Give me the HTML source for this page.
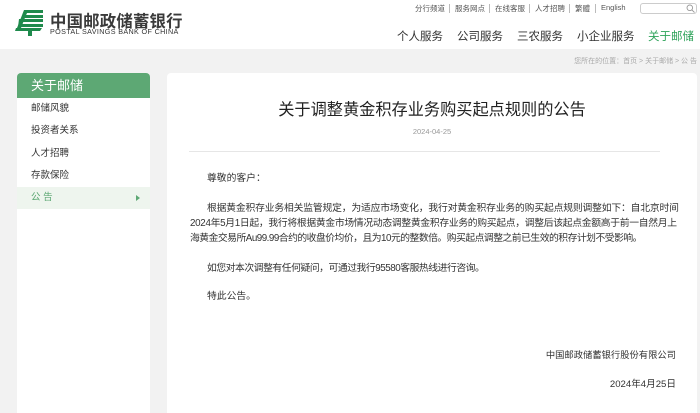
<!DOCTYPE html>
<html><head><meta charset="utf-8"><style>
*{margin:0;padding:0;box-sizing:border-box}
body{width:700px;height:407px;overflow:hidden;background:#f2f2f2;font-family:"Liberation Sans","Noto Sans CJK SC",sans-serif;color:#333;position:relative}
.hd{position:absolute;left:0;top:0;width:700px;height:49px;background:#fff}
.abs{position:absolute;white-space:nowrap}
.tl{font-size:7.5px;color:#555;top:3px}
.sep{position:absolute;top:4px;width:1px;height:9px;background:#bbb}
.nav{font-size:11.5px;color:#333;top:28px}
.side{position:absolute;left:17px;top:73px;width:133px;height:340px;background:#fff;border-radius:4px 4px 0 0;overflow:hidden}
.side .h{height:25px;background:#5da874;color:#fff;font-size:13px;line-height:25px;padding-left:14px}
.side .i{height:22.3px;line-height:22.3px;font-size:9.5px;padding-left:14px;color:#333}
.side .a{background:#eef5ee;color:#5da874;position:relative}
.main{position:absolute;left:167px;top:73px;width:530px;height:340px;background:#fff;border-radius:4px 4px 0 0}
.p{font-size:9.8px;color:#333;position:absolute;white-space:nowrap}
</style></head><body>
<div class="hd"></div>
<svg class="abs" style="left:15px;top:9px" width="29" height="28" viewBox="0 0 29 28">
<g fill="#1f8a4c">
<path d="M9 1h19v3H12l-1 2h17v3H9z"/>
<path d="M4 10h24v3H7l-1 2h22v3H3z"/>
<path d="M1 19h26l-2 3H17v5h-4v-5H0z"/>
<path d="M9 1h4L6 19H2z"/>
</g></svg>
<div class="abs" style="left:50px;top:8px;font-size:16.4px;font-weight:bold;color:#3a3a3a;letter-spacing:0.2px">中国邮政储蓄银行</div>
<div class="abs" style="left:50px;top:27px;font-size:7.2px;color:#333;letter-spacing:0.35px">POSTAL SAVINGS BANK OF CHINA</div>

<div class="abs tl" style="left:415px">分行频道</div><div class="sep" style="left:449px"></div>
<div class="abs tl" style="left:455px">服务网点</div><div class="sep" style="left:489px"></div>
<div class="abs tl" style="left:495px">在线客服</div><div class="sep" style="left:529px"></div>
<div class="abs tl" style="left:535px">人才招聘</div><div class="sep" style="left:569px"></div>
<div class="abs tl" style="left:575px">繁體</div><div class="sep" style="left:595px"></div>
<div class="abs tl" style="left:601px">English</div>
<div class="abs" style="left:640px;top:3px;width:57px;height:11px;border:1px solid #ccc;border-radius:3px"></div>
<svg class="abs" style="left:686px;top:4px" width="9" height="9" viewBox="0 0 9 9"><circle cx="3.8" cy="3.8" r="2.8" fill="none" stroke="#999" stroke-width="0.9"/><path d="M5.8 5.8L8.5 8.5" stroke="#999" stroke-width="0.9"/></svg>

<div class="abs nav" style="left:397px">个人服务</div>
<div class="abs nav" style="left:457px">公司服务</div>
<div class="abs nav" style="left:517px">三农服务</div>
<div class="abs nav" style="left:577px">小企业服务</div>
<div class="abs nav" style="left:648px;color:#2ea35a">关于邮储</div>
<div class="abs" style="right:3px;top:56px;font-size:7px;color:#aaa">您所在的位置：首页 &gt; 关于邮储 &gt; 公 告</div>

<div class="side">
<div class="h">关于邮储</div>
<div class="i">邮储风貌</div>
<div class="i">投资者关系</div>
<div class="i">人才招聘</div>
<div class="i">存款保险</div>
<div class="i a">公 告<span style="position:absolute;left:119px;top:8px;width:0;height:0;border-left:4px solid #5da874;border-top:3px solid transparent;border-bottom:3px solid transparent"></span></div>
</div>

<div class="main">
<div class="abs" style="left:0;width:530px;text-align:center;top:23px;font-size:16.2px;color:#222">关于调整黄金积存业务购买起点规则的公告</div>
<div class="abs" style="left:0;width:530px;text-align:center;top:54px;font-size:7.5px;color:#999">2024-04-25</div>
<div class="abs" style="left:22px;top:78px;width:471px;height:1px;background:#e6e6e6"></div>
<div class="p" style="left:40px;top:97px">尊敬的客户：</div>
<div class="p" style="left:40px;top:127px;letter-spacing:-0.17px">根据黄金积存业务相关监管规定，为适应市场变化，我行对黄金积存业务的购买起点规则调整如下：自北京时间</div>
<div class="p" style="left:23px;top:142px;letter-spacing:-0.3px">2024年5月1日起，我行将根据黄金市场情况动态调整黄金积存业务的购买起点，调整后该起点金额高于前一自然月上</div>
<div class="p" style="left:23px;top:157px;letter-spacing:-0.5px">海黄金交易所Au99.99合约的收盘价均价，且为10元的整数倍。购买起点调整之前已生效的积存计划不受影响。</div>
<div class="p" style="left:40px;top:187px;letter-spacing:-0.45px">如您对本次调整有任何疑问，可通过我行95580客服热线进行咨询。</div>
<div class="p" style="left:40px;top:215px">特此公告。</div>
<div class="p" style="right:21px;top:274px;font-size:9.3px">中国邮政储蓄银行股份有限公司</div>
<div class="p" style="right:21px;top:303px;font-size:9.6px">2024年4月25日</div>
</div>
</body></html>
